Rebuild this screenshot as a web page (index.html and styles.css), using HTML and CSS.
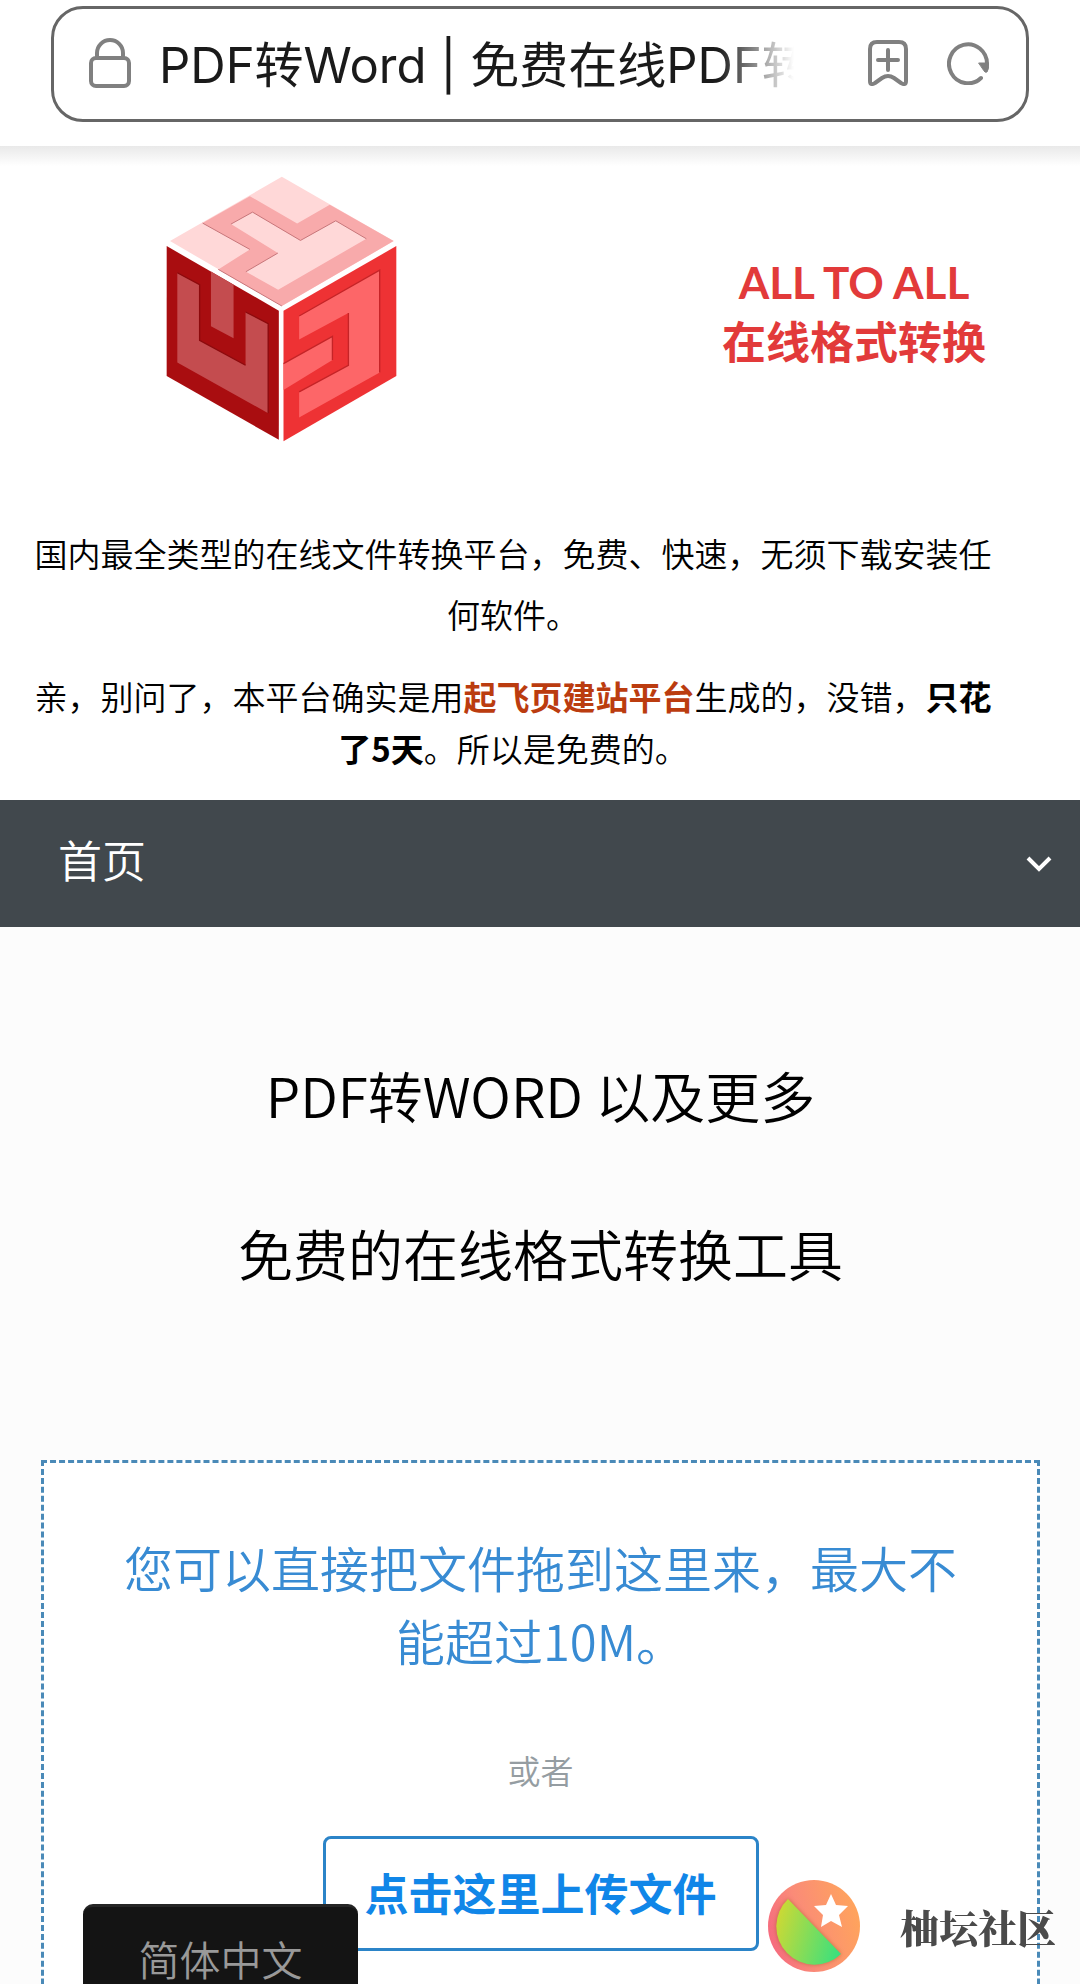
FILE: index.html
```html
<!DOCTYPE html>
<html lang="zh-CN">
<head>
    <meta charset="UTF-8">
    <meta name="viewport" content="width=device-width, initial-scale=1.0">
    <title>PDF转Word | 免费在线PDF转换</title>
    <link rel="stylesheet" href="styles.css">
</head>
<body>

    <!-- 地址栏 -->
    <div class="browser-bar">
        <div class="address">
            <svg class="icon-lock" viewBox="0 0 42 50" aria-hidden="true">
                <rect x="2" y="20" width="38" height="28" rx="5"/>
                <path d="M8 20v-5a13 13 0 0 1 26 0v5"/>
            </svg>
            <input class="address-text" type="text" aria-label="地址" value="PDF转Word | 免费在线PDF转换" readonly>
            <button class="icon-button" type="button" aria-label="添加书签">
                <svg class="icon-bookmark" viewBox="0 0 40 46" aria-hidden="true">
                    <path d="M2 41V9q0-7 7-7h22q7 0 7 7v32q0 5-5 2l-7-5q-6-4-12 0l-7 5q-5 3-5-2z"/>
                    <path d="M20 10v20M10 20h20"/>
                </svg>
            </button>
            <button class="icon-button" type="button" aria-label="刷新">
                <svg class="icon-reload" viewBox="0 0 42 44" aria-hidden="true">
                    <path d="M34 37A19 19.500 0 1 1 40 23"/>
                    <path class="arrow" d="M32 22h10q0 6-2 9-2 1-3-1z"/>
                </svg>
            </button>
        </div>
    </div>

    <!-- 头部 -->
    <header class="site-header">
        <svg class="logo" viewBox="48 48 694 798" role="img" aria-label="ALL TO ALL">
            <!-- 顶面 -->
            <path fill="#ffd8d8" d="M396 50L732 243 396 438 60 243z"/>
            <path fill="#f8aaab" d="M300 108L442 190 540 134 732 243 396 438 205 328 300 268 158 189z"/>
            <path fill="#ffd8d8" d="M308 156L452 241 558 182 650 236 385 389 288 335 384 279 243 192z"/>
            <path fill="none" stroke="#c77579" stroke-width="3" d="M158 189L300 268M205 328L396 438M243 192L308 156 452 241 558 182 650 236M384 279L288 335"/>
            <!-- 左面 -->
            <path fill="#a90d10" d="M50 258L387 452V840L50 648z"/>
            <path fill="#c44c4f" d="M82 338L149 374V541L287 616V456L355 491V760L82 608z"/>
            <path fill="#c44c4f" d="M183 334L251 374V535L183 499z"/>
            <path fill="none" stroke="#8c0a0d" stroke-width="4" d="M82 338L149 374V541L287 616M287 456L355 491V760"/>
            <!-- 右面 -->
            <path fill="#ee3234" d="M401 452L740 258V648L401 844z"/>
            <path fill="#fd6668" d="M448 468L690 330V638L448 773V696L596 616V459L448 539z"/>
            <path fill="#fd6668" d="M401 611L548 529V600L401 690z"/>
            <path fill="none" stroke="#c52427" stroke-width="4" d="M448 468L690 330V638M596 459V616L448 696M401 611L548 529V600"/>
        </svg>
        <h1 class="site-title">ALL TO ALL<br>在线格式转换</h1>
    </header>

    <!-- 简介 -->
    <section class="intro">
        <p class="intro-lead">国内最全类型的在线文件转换平台，免费、快速，无须下载安装任何软件。</p>
        <p>亲，别问了，本平台确实是用<a href="#">起飞页建站平台</a>生成的，没错，<strong>只花了5天</strong>。所以是免费的。</p>
    </section>

    <!-- 导航 -->
    <nav class="navbar">
        <a href="#">首页</a>
        <button class="nav-toggle" type="button" aria-label="展开菜单">
            <svg viewBox="0 0 26 16" aria-hidden="true"><path d="M2 2l11 11L24 2"/></svg>
        </button>
    </nav>

    <!-- 主要内容 -->
    <main class="content">
        <h2>PDF转WORD 以及更多</h2>
        <h2>免费的在线格式转换工具</h2>

        <div class="dropzone">
            <p class="drop-text">您可以直接把文件拖到这里来，最大不能超过10M。</p>
            <p class="drop-or">或者</p>
            <button class="upload" type="button">点击这里上传文件</button>
        </div>
    </main>

    <!-- 语言切换 -->
    <button class="language" type="button">简体中文</button>

    <!-- 水印 -->
    <div class="watermark">
        <svg viewBox="0 0 92 92" aria-hidden="true">
            <defs>
                <linearGradient id="peel" x1="0" y1=".7" x2="1" y2=".4">
                    <stop offset="0" stop-color="#f5697f"/>
                    <stop offset=".4" stop-color="#fa8b78"/>
                    <stop offset="1" stop-color="#ffa45c"/>
                </linearGradient>
                <linearGradient id="pulp" x1="0" y1=".4" x2="1" y2=".7">
                    <stop offset="0" stop-color="#c9d936"/>
                    <stop offset="1" stop-color="#3be07d"/>
                </linearGradient>
            </defs>
            <circle cx="46" cy="46" r="46" fill="url(#peel)"/>
            <path class="slice" fill="url(#pulp)" d="M20 19L73 74A38 38 0 0 1 20 19z"/>
            <path fill="#fff" d="M63 14l5 11 12 1-9 9 3 12-11-6-10 6 2-12-9-9 12-1z"/>
        </svg>
        <span>柚坛社区</span>
    </div>

</body>
</html>
```
FILE: styles.css
```css
* {
    box-sizing: border-box;
}

body {
    margin: 0;
    height: 100vh;
    overflow: hidden;
    font-family: "Noto Sans CJK SC", "Noto Sans", sans-serif;
    font-weight: 350;
    color: #000;
    background-color: #fff;
}

h1, h2, p {
    margin: 0;
}

button {
    font-family: inherit;
    cursor: pointer;
}

a {
    text-decoration: none;
}

/* 地址栏 */
.browser-bar {
    padding: 6px 51px 24px;
}

.address {
    display: flex;
    align-items: center;
    height: 116px;
    padding: 0 37px 2px 35px;
    border: 3px solid #666;
    border-radius: 32px;
}

.address svg {
    display: block;
    fill: none;
    stroke: #808080;
    stroke-width: 4;
    stroke-linecap: round;
    stroke-linejoin: round;
}

.icon-lock {
    width: 42px;
    height: 50px;
}

.address-text {
    flex: 1;
    min-width: 0;
    height: 80px;
    margin: 0 74px 0 28px;
    padding: 0 0 3px;
    border: 0;
    outline: 0;
    font-family: Inter, "Noto Sans CJK SC", sans-serif;
    font-size: 49px;
    font-weight: 400;
    color: #1a1a1a;
    background: none;
    -webkit-mask-image: linear-gradient(to right, #000 88%, transparent);
    mask-image: linear-gradient(to right, #000 88%, transparent);
}

.icon-button {
    padding: 0;
    border: 0;
    background: none;
}

.icon-button + .icon-button {
    margin-left: 39px;
}

.icon-bookmark {
    width: 40px;
    height: 46px;
}

.icon-reload {
    width: 42px;
    height: 44px;
}

.icon-reload .arrow {
    fill: #808080;
    stroke-width: 1;
}

/* 头部 */
.site-header {
    display: flex;
    justify-content: space-between;
    align-items: flex-start;
    padding: 30px 94px 81px 166px;
    background: linear-gradient(#e9e9e9, #fff 20px);
}

.logo {
    width: 231px;
    height: 266px;
}

.site-title {
    padding-top: 76px;
    font-family: Lato, "Noto Sans CJK SC", sans-serif;
    font-size: 44px;
    font-weight: 700;
    line-height: 60px;
    text-align: center;
    color: #e23a3a;
}

/* 简介 */
.intro {
    padding: 0 87px 26px 33px;
    font-size: 33px;
    line-height: 52px;
    text-align: center;
}

.intro-lead {
    margin-bottom: 25px;
    line-height: 61px;
}

.intro a {
    font-weight: 700;
    color: #bb3c0f;
}

.intro strong {
    font-weight: 700;
}

/* 导航 */
.navbar {
    display: flex;
    justify-content: space-between;
    align-items: center;
    height: 127px;
    padding: 0 28px 0 58px;
    background-color: #41484d;
}

.navbar a {
    padding-bottom: 10px;
    font-size: 44px;
    color: #fff;
}

.nav-toggle {
    padding: 0;
    border: 0;
    background: none;
}

.nav-toggle svg {
    display: block;
    width: 26px;
    height: 16px;
    fill: none;
    stroke: #fff;
    stroke-width: 4;
}

/* 主要内容 */
.content {
    padding: 88px 40px 0 41px;
    background-color: #fcfcfc;
}

.content h2 {
    font-size: 55px;
    font-weight: 350;
    line-height: 158px;
    text-align: center;
}

.dropzone {
    margin-top: 129px;
    padding: 67px 60px 120px;
    border: 3px dashed #4a8ab8;
    text-align: center;
    background-color: #fff;
}

.drop-text {
    padding: 0 20px;
    font-size: 49px;
    line-height: 73px;
    color: #388bd3;
}

.drop-or {
    margin: 68px 0 40px;
    font-size: 33px;
    line-height: 52px;
    color: #959da2;
}

.upload {
    height: 115px;
    padding: 0 39px 3px;
    border: 3px solid #2b84c8;
    border-radius: 8px;
    font-size: 44px;
    font-weight: 700;
    color: #1086e8;
    background-color: #fff;
}

/* 语言切换 */
.language {
    position: fixed;
    left: 83px;
    bottom: -24px;
    width: 275px;
    height: 104px;
    padding: 0;
    border: 0;
    border-top: 3px solid #262626;
    border-radius: 10px;
    font-size: 41px;
    font-weight: 350;
    color: #999;
    background-color: #141414;
}

/* 水印 */
.watermark {
    position: fixed;
    right: 24px;
    bottom: 12px;
    display: flex;
    align-items: center;
    gap: 40px;
    font-family: "Noto Serif CJK SC", "Noto Sans CJK SC", serif;
    font-size: 39px;
    font-weight: 900;
    color: #4a4a4a;
}

.watermark svg {
    width: 92px;
    height: 92px;
}

.watermark .slice {
    filter: drop-shadow(0 0 2px rgba(120, 60, 0, 0.4));
}
```
